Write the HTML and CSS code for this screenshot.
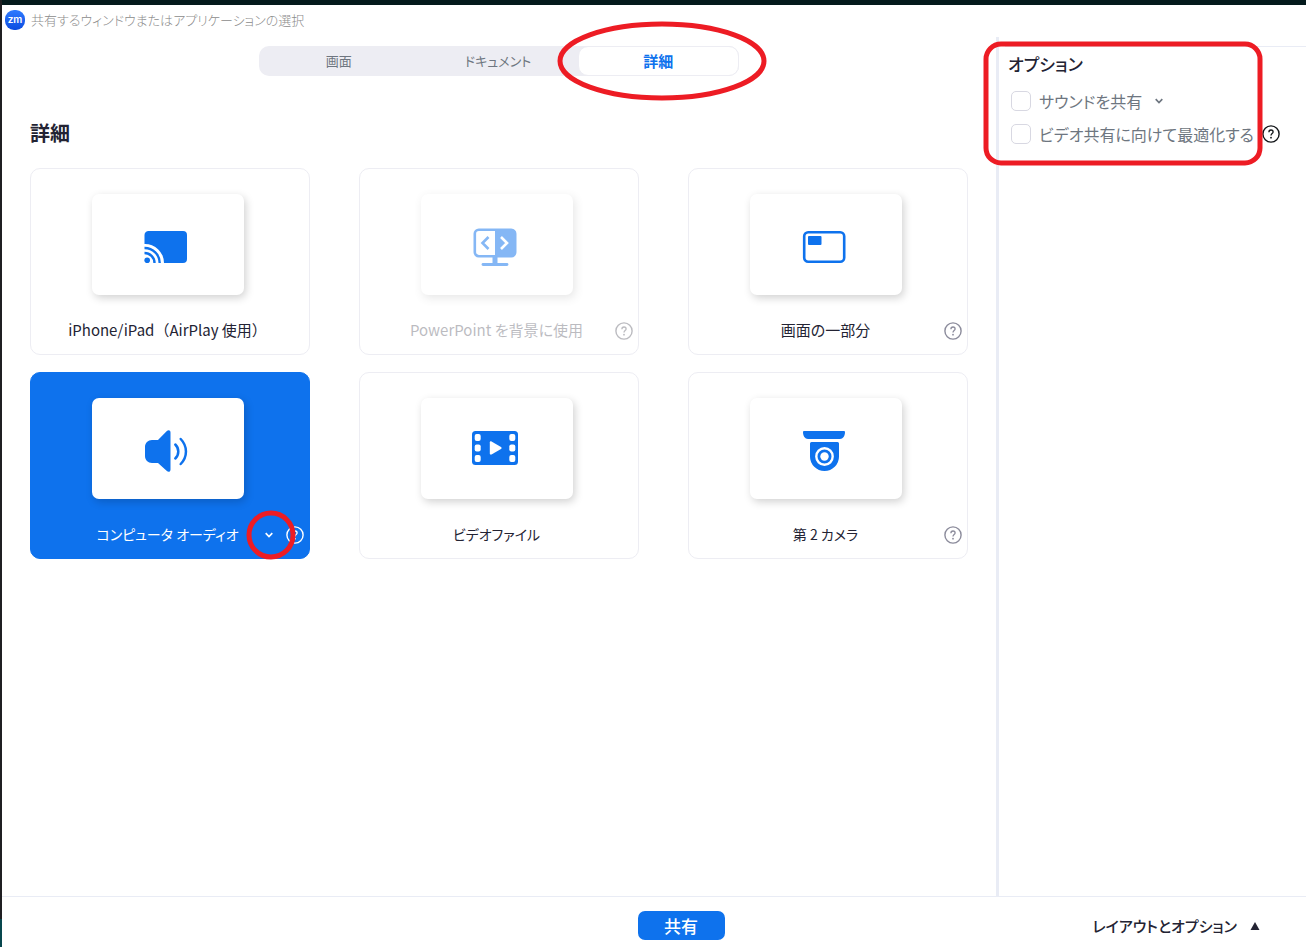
FILE: index.html
```html
<!DOCTYPE html>
<html lang="ja">
<head>
<meta charset="utf-8">
<title>共有するウィンドウまたはアプリケーションの選択</title>
<link rel="stylesheet" href="styles.css">
</head>
<body>
<svg class="defs" aria-hidden="true">
  <symbol id="help" viewBox="0 0 18 18">
    <circle cx="9" cy="9" r="8.1" fill="none" stroke="currentColor" stroke-width="1.4"/>
    <path d="M6.9 7.2C6.9 5.8 7.8 5 9 5s2.1.8 2.1 2c0 1.500-2.100 1.700-2.100 3.400" fill="none" stroke="currentColor" stroke-width="1.3"/>
    <circle cx="9" cy="12.700" r=".9" fill="currentColor"/>
  </symbol>
  <symbol id="chevron" viewBox="0 0 10 8">
    <path d="M1.700 2.200 5 5.500l3.300-3.300" fill="none" stroke="currentColor" stroke-width="1.700"/>
  </symbol>
</svg>
<div class="window">
  <header class="titlebar">
    <span class="logo">zm</span>
    <h1 class="title">共有するウィンドウまたはアプリケーションの選択</h1>
  </header>

  <div class="body">
    <main class="content">
      <nav class="tabs" role="tablist">
        <button class="tab" role="tab">画面</button>
        <button class="tab" role="tab">ドキュメント</button>
        <button class="tab tab-active" role="tab" aria-selected="true">詳細
          <svg class="mark mark-tab" viewBox="0 0 210 80" aria-hidden="true"><ellipse cx="105" cy="40" rx="102" ry="37"/></svg>
        </button>
      </nav>
      <h2 class="heading">詳細</h2>

      <section class="grid">
        <div class="card">
          <button class="thumb" aria-labelledby="c1">
            <svg width="44" height="34" viewBox="0 0 44 34">
              <path fill="#0e72ed" d="M5 1h34a4 4 0 0 1 4 4v24a4 4 0 0 1-4 4H20A19 19 0 0 0 .5 14V5A4 4 0 0 1 5 1z"/>
              <g fill="none" stroke="#0e72ed" stroke-width="2.400"><path d="M.5 18A15 15 0 0 1 15.700 33M.5 23A10 10 0 0 1 10.500 33"/></g>
              <circle cx="3.200" cy="30.300" r="2.800" fill="#0e72ed"/>
            </svg>
          </button>
          <div class="caption"><span class="label label-full" id="c1">iPhone/iPad（AirPlay 使用）</span></div>
        </div>

        <div class="card card-disabled">
          <button class="thumb" aria-labelledby="c2" disabled>
            <svg width="44" height="40" viewBox="0 0 44 40">
              <rect x="1.800" y="2.800" width="40.400" height="26.400" rx="4" fill="#fff" stroke="#0e72ed" stroke-width="2.600"/>
              <path fill="#0e72ed" d="M22 2h16a5 5 0 0 1 5 5v18a5 5 0 0 1-5 5H22zM19.500 30h5v6h-5z"/>
              <path d="M10 37.500h24" stroke="#0e72ed" stroke-width="2.800" stroke-linecap="round"/>
              <path d="m15.500 10-6 6 6 6" fill="none" stroke="#0e72ed" stroke-width="2.600"/>
              <path d="m28 10 6 6-6 6" fill="none" stroke="#fff" stroke-width="2.600"/>
            </svg>
          </button>
          <div class="caption"><span class="label" id="c2">PowerPoint を背景に使用</span>
            <span class="tools"><button class="icon-btn" aria-label="ヘルプ" disabled><svg width="18" height="18"><use href="#help"/></svg></button></span></div>
        </div>

        <div class="card">
          <button class="thumb" aria-labelledby="c3">
            <svg width="44" height="34" viewBox="0 0 44 34">
              <rect x="2.200" y="2.200" width="40" height="29.600" rx="4" fill="none" stroke="#0e72ed" stroke-width="2.600"/>
              <rect x="6" y="6" width="13.500" height="9" rx="1" fill="#0e72ed"/>
            </svg>
          </button>
          <div class="caption"><span class="label" id="c3">画面の一部分</span>
            <span class="tools"><button class="icon-btn" aria-label="ヘルプ"><svg width="18" height="18"><use href="#help"/></svg></button></span></div>
        </div>

        <div class="card card-selected">
          <button class="thumb" aria-labelledby="c4">
            <svg width="44" height="44" viewBox="0 0 44 44">
              <path fill="#0e72ed" d="M8 11h6l8.600-8.800C24.300.4 26.500 1 26.500 3.500v37c0 2.500-2.200 3.100-3.900 1.300L14 34H8c-4 0-7-3-7-7v-9c0-4 3-7 7-7z"/>
              <g fill="none" stroke="#0e72ed" stroke-width="2.500" stroke-linecap="round"><path d="M31.300 15.500c4 3.900 4 10.100 0 14M36.700 10c7 7.200 7 17.800 0 25"/></g>
            </svg>
          </button>
          <div class="caption"><span class="label label-kana" id="c4">コンピュータ オーディオ</span>
            <span class="tools">
              <button class="icon-btn menu-btn" aria-label="オーディオのオプション"><svg width="10" height="8"><use href="#chevron"/></svg>
                <svg class="mark mark-menu" viewBox="0 0 52 52" aria-hidden="true"><circle cx="26" cy="26" r="22"/></svg>
              </button>
              <button class="icon-btn" aria-label="ヘルプ"><svg width="18" height="18"><use href="#help"/></svg></button>
            </span></div>
        </div>

        <div class="card">
          <button class="thumb" aria-labelledby="c5">
            <svg width="46" height="42" viewBox="0 0 46 42">
              <rect x="0" y="1" width="46" height="34" rx="3.500" fill="#0e72ed"/>
              <g fill="#fff"><rect x="2.700" y="4" width="6" height="7" rx="2"/><rect x="2.700" y="14.500" width="6" height="7" rx="2"/><rect x="2.700" y="25" width="6" height="7" rx="2"/><rect x="37.300" y="4" width="6" height="7" rx="2"/><rect x="37.300" y="14.500" width="6" height="7" rx="2"/><rect x="37.300" y="25" width="6" height="7" rx="2"/>
              <path d="M17.800 12.500c0-.9.900-1.400 1.700-1l9.500 5.500c.8.500.8 1.500 0 2l-9.500 5.500c-.8.400-1.700-.1-1.700-1z"/></g>
            </svg>
          </button>
          <div class="caption"><span class="label label-kana" id="c5">ビデオファイル</span></div>
        </div>

        <div class="card">
          <button class="thumb" aria-labelledby="c6">
            <svg width="44" height="42" viewBox="0 0 44 42">
              <path fill="#0e72ed" d="M2 1h40a1 1 0 0 1 1 1c0 4-2 7-5 7H6C3 9 1 6 1 2a1 1 0 0 1 1-1zM9.500 12h26a1.500 1.500 0 0 1 1.500 1.500V26.500a14.500 14.500 0 0 1-29 0V13.500A1.500 1.500 0 0 1 9.500 12z"/>
              <circle cx="22.500" cy="26.500" r="8.200" fill="none" stroke="#fff" stroke-width="2.400"/>
              <circle cx="22.500" cy="26.500" r="4.200" fill="#fff"/>
            </svg>
          </button>
          <div class="caption"><span class="label label-kana" id="c6">第 2 カメラ</span>
            <span class="tools"><button class="icon-btn" aria-label="ヘルプ"><svg width="18" height="18"><use href="#help"/></svg></button></span></div>
        </div>
      </section>
    </main>

    <aside class="sidebar">
      <div class="options">
        <h2 class="options-title">オプション</h2>
        <div class="option">
          <input type="checkbox" class="check" id="sound"><label for="sound">サウンドを共有</label>
          <button class="icon-btn sound-menu" aria-label="サウンドのオプション"><svg width="10" height="8"><use href="#chevron"/></svg></button>
        </div>
        <div class="option">
          <input type="checkbox" class="check" id="video"><label for="video">ビデオ共有に向けて最適化する</label>
          <button class="icon-btn video-help" aria-label="ヘルプ"><svg width="18" height="18"><use href="#help"/></svg></button>
        </div>
        <svg class="mark mark-options" viewBox="0 0 280 125" aria-hidden="true"><rect x="3" y="3" width="274" height="119" rx="15"/></svg>
      </div>
    </aside>
  </div>

  <footer class="footer">
    <button class="share">共有</button>
    <button class="layout-btn">レイアウトとオプション
      <svg width="10" height="8" viewBox="0 0 10 8" aria-hidden="true"><path d="M5 0 9.500 8H.5z" fill="currentColor"/></svg>
    </button>
  </footer>
</div>
</body>
</html>
```
FILE: styles.css
```css
* { box-sizing: border-box; }
body {
  margin: 0;
  padding-left: 2px;
  background: linear-gradient(#1f1f22 97%, #08474d 97%);
  color: #232333;
  font-family: "Noto Sans CJK JP", "Noto Sans", sans-serif;
  font-size: 15px;
  line-height: 20px;
  font-feature-settings: "palt";
}
h1, h2 { margin: 0; }
button {
  margin: 0;
  padding: 0;
  border: 0;
  background: none;
  color: inherit;
  font: inherit;
  font-feature-settings: inherit;
}
svg { display: block; }
.defs { position: absolute; width: 0; height: 0; }

.window {
  min-height: 100vh;
  display: flex;
  flex-direction: column;
  border-top: 5px solid #041a1c;
  background: #fff;
}
.titlebar {
  display: flex;
  align-items: center;
  gap: 6px;
  height: 32px;
  padding: 0 3px 2px;
}
.logo {
  width: 20px;
  height: 20px;
  border-radius: 9px;
  background: linear-gradient(#2f7bff, #0b4be0);
  color: #fff;
  font-family: Inter, sans-serif;
  font-size: 10px;
  font-weight: 600;
  line-height: 18px;
  text-align: center;
}
.title { color: #8c8c8c; font-size: 13px; font-weight: 300; }

.body { flex: 1; display: flex; }
.content { flex: 1; min-width: 0; padding: 9px 28px 0; }
.tabs {
  display: flex;
  width: 480px;
  height: 30px;
  margin: 0 auto;
  border-radius: 10px;
  background: #ededf3;
}
.tab { flex: 1; color: #6e7680; font-size: 13px; }
.tab-active {
  position: relative;
  border: 1px solid #ededf3;
  border-radius: 10px;
  background: #fff;
  color: #0e72ed;
  font-size: 15px;
  font-weight: 700;
}
.heading {
  margin: 45px 0 23px;
  font-size: 20px;
  line-height: 24px;
  font-weight: 700;
}
.grid {
  display: grid;
  grid-template-columns: repeat(3, minmax(0, 1fr));
  gap: 17px 49px;
}
.card {
  padding: 25px 5px 12px 0;
  border: 1px solid #ededf3;
  border-radius: 10px;
}
.card-selected {
  border-color: #0e72ed;
  background: #0e72ed;
  color: #fff;
}
.card-disabled > * { opacity: 0.5; }
.card-disabled .caption { opacity: 0.3; }
.card-disabled .icon-btn { color: #232333; }
.thumb {
  display: flex;
  align-items: center;
  justify-content: center;
  width: 152px;
  height: 101px;
  margin: 0 auto;
  padding: 4px 3px 0 0;
  border-radius: 7px;
  background: #fff;
  box-shadow: 2px 3px 8px rgba(0, 0, 0, 0.18);
}
.caption {
  display: grid;
  grid-template-columns: 1fr auto 1fr;
  align-items: center;
  height: 24px;
  margin-top: 23px;
}
.label { grid-column: 2; white-space: nowrap; }
.label-full { font-feature-settings: normal; }
.label-kana { font-size: 14px; }
.tools {
  display: flex;
  justify-content: flex-end;
  align-items: center;
  gap: 12px;
  padding-top: 2px;
}
.icon-btn { color: #8c8c9c; }
.card-selected .icon-btn { color: #fff; }
.menu-btn { position: relative; }

.sidebar {
  width: 310px;
  padding: 9px 0 0 6px;
  border-left: 3px solid #e9ecf5;
}
.options {
  position: relative;
  padding: 5px 0 0 3px;
  border-top: 1px solid #e9ecf5;
}
.options-title { margin-bottom: 8px; font-size: 17px; line-height: 24px; font-weight: 500; }
.option {
  display: flex;
  align-items: center;
  height: 33px;
  padding-left: 3px;
  color: #6e7680;
  font-size: 16px;
}
.option label { margin-left: 8px; white-space: nowrap; }
.check {
  appearance: none;
  width: 20px;
  height: 20px;
  margin: 0;
  border: 1px solid #d8d8e2;
  border-radius: 5px;
  background: #fff;
}
.sound-menu { margin-left: 12px; color: #6e7680; }
.video-help { margin-left: 8px; color: #131619; }

.footer {
  display: grid;
  grid-template-columns: 1fr auto 1fr;
  align-items: center;
  height: 51px;
  padding: 7px 46px 0 100px;
  border-top: 1px solid #e9ecf5;
}
.share {
  grid-column: 2;
  width: 87px;
  height: 29px;
  border-radius: 7px;
  background: #0e72ed;
  color: #fff;
  font-size: 17px;
  font-weight: 500;
}
.layout-btn {
  display: flex;
  align-items: center;
  justify-self: end;
  gap: 13px;
  font-size: 15px;
  font-weight: 500;
}

/* Red call-outs drawn over the controls they point at */
.mark {
  position: absolute;
  fill: none;
  stroke: #ed1c24;
  stroke-width: 5px;
  pointer-events: none;
}
.mark-tab { width: 210px; height: 80px; left: -22px; top: -26px; z-index: 1; }
.mark-menu { width: 52px; height: 52px; left: -19px; top: -22px; z-index: 1; }
.mark-options { width: 280px; height: 125px; left: -22px; top: -6px; }
```
